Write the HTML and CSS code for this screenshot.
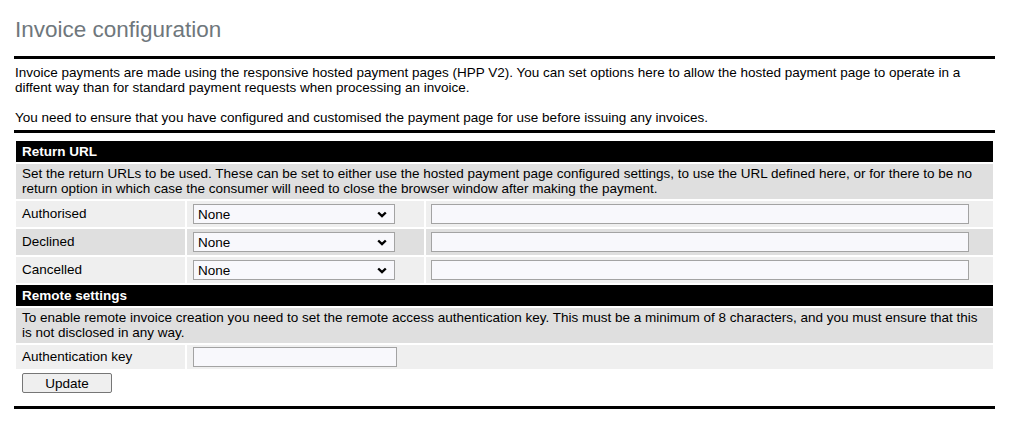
FILE: index.html
```html
<!DOCTYPE html>
<html>
  <head>
    <title>Invoice configuration</title>
    <meta name="viewport" content="width=device-width, initial-scale=1.0">
    <link rel="stylesheet" href="styles.css">
  </head>
  <body>
    <div class="page">
      <h1>Invoice configuration</h1>
      <hr>
      <p>Invoice payments are made using the responsive hosted payment pages (HPP V2). You can set options here to allow the hosted payment page to operate in a diffent way than for standard payment requests when processing an invoice.</p>
      <p>You need to ensure that you have configured and customised the payment page for use before issuing any invoices.</p>
      <hr>
      <form>
        <table class="config">
          <colgroup>
            <col class="col-label">
            <col class="col-select">
            <col>
          </colgroup>
          <tr class="head"><td colspan="3">Return URL</td></tr>
          <tr class="desc"><td colspan="3">Set the return URLs to be used. These can be set to either use the hosted payment page configured settings, to use the URL defined here, or for there to be no return option in which case the consumer will need to close the browser window after making the payment.</td></tr>
          <tr class="light">
            <td>Authorised</td>
            <td><select><option>None</option><option>Hosted page settings</option><option>URL</option></select></td>
            <td><input type="text" class="url"></td>
          </tr>
          <tr class="dark">
            <td>Declined</td>
            <td><select><option>None</option><option>Hosted page settings</option><option>URL</option></select></td>
            <td><input type="text" class="url"></td>
          </tr>
          <tr class="light">
            <td>Cancelled</td>
            <td><select><option>None</option><option>Hosted page settings</option><option>URL</option></select></td>
            <td><input type="text" class="url"></td>
          </tr>
          <tr class="head"><td colspan="3">Remote settings</td></tr>
          <tr class="desc"><td colspan="3">To enable remote invoice creation you need to set the remote access authentication key. This must be a minimum of 8 characters, and you must ensure that this is not disclosed in any way.</td></tr>
          <tr class="light key-row">
            <td>Authentication key</td>
            <td colspan="2"><input type="text" class="key"></td>
          </tr>
          <tr class="plain">
            <td colspan="3"><button type="button" class="update">Update</button></td>
          </tr>
        </table>
      </form>
      <hr class="last">
    </div>
  </body>
</html>
```

FILE: styles.css
```css
body {
  font-family: "Liberation Sans", Arial, sans-serif;
  font-size: 13.5px;
  margin: 0;
  padding: 0;
  color: #000;
}
.page {
  width: 981px;
  margin-left: 14px;
}
h1 {
  font-size: 22.5px;
  font-weight: normal;
  color: #6f777c;
  margin: 16px 0 0 1px;
  line-height: 28px;
}
hr {
  border: 0;
  border-top: 3px solid #000;
  height: 0;
  margin: 12px 0 6px 0;
}
p {
  margin: 0 0 0 1px;
  line-height: 15px;
}
p + p {
  margin-top: 15px;
}
p + hr {
  margin-top: 5px;
}
form {
  margin: 0;
}
.config {
  width: 100%;
  border-spacing: 2px;
  table-layout: fixed;
  margin-top: 0;
  font-size: 13.5px;
}
.col-label {
  width: 169px;
}
.col-select {
  width: 237px;
}
.config td {
  padding: 3px 6px;
  line-height: 15px;
  vertical-align: middle;
}
.head td {
  background-color: #000;
  color: #fff;
  font-weight: bold;
}
.desc td {
  background-color: #dfdfdf;
  padding: 2px 6px 3px 6px;
}
.light td {
  background-color: #efefef;
}
.dark td {
  background-color: #dfdfdf;
}
.light td, .dark td {
  padding: 3px 5px 3px 6px;
  line-height: 20px;
}
.key-row td {
  padding: 2px 5px 2px 6px;
}
.config td + td {
  padding-left: 5px;
}
select {
  -webkit-appearance: none;
  appearance: none;
  display: block;
  width: 202px;
  height: 20px;
  box-sizing: border-box;
  font-family: "Liberation Sans", Arial, sans-serif;
  font-size: 13.5px;
  border: 1px solid #a3a3a3;
  border-radius: 0;
  background-color: #f8f8fc;
  background-image: url("data:image/svg+xml;utf8,<svg xmlns='http://www.w3.org/2000/svg' width='10' height='7' viewBox='0 0 10 7'><path d='M1.2 1.5l3.8 3.6 3.8-3.6' stroke='black' stroke-width='2.4' fill='none'/></svg>");
  background-repeat: no-repeat;
  background-position: right 7px center;
  padding: 0 4px;
  margin: 0 0 0 1px;
  color: #000;
}
input[type="text"] {
  display: block;
  height: 20px;
  box-sizing: border-box;
  border: 1px solid #a3a3a3;
  background-color: #f8f8fc;
  margin: 0;
  padding: 1px 4px;
  font-family: "Liberation Sans", Arial, sans-serif;
  font-size: 13.5px;
}
.url {
  width: 538px;
}
.key {
  width: 204px;
  margin-left: 1px !important;
}
.plain td {
  background-color: transparent;
  padding: 2px 6px;
}
.update {
  display: block;
  width: 90px;
  height: 20px;
  font-family: "Liberation Sans", Arial, sans-serif;
  font-size: 13.5px;
  background-color: #efefef;
  border: 1px solid #767676;
  border-radius: 2px;
  padding: 0;
  color: #000;
}
hr.last {
  margin-top: 9px;
}
```
